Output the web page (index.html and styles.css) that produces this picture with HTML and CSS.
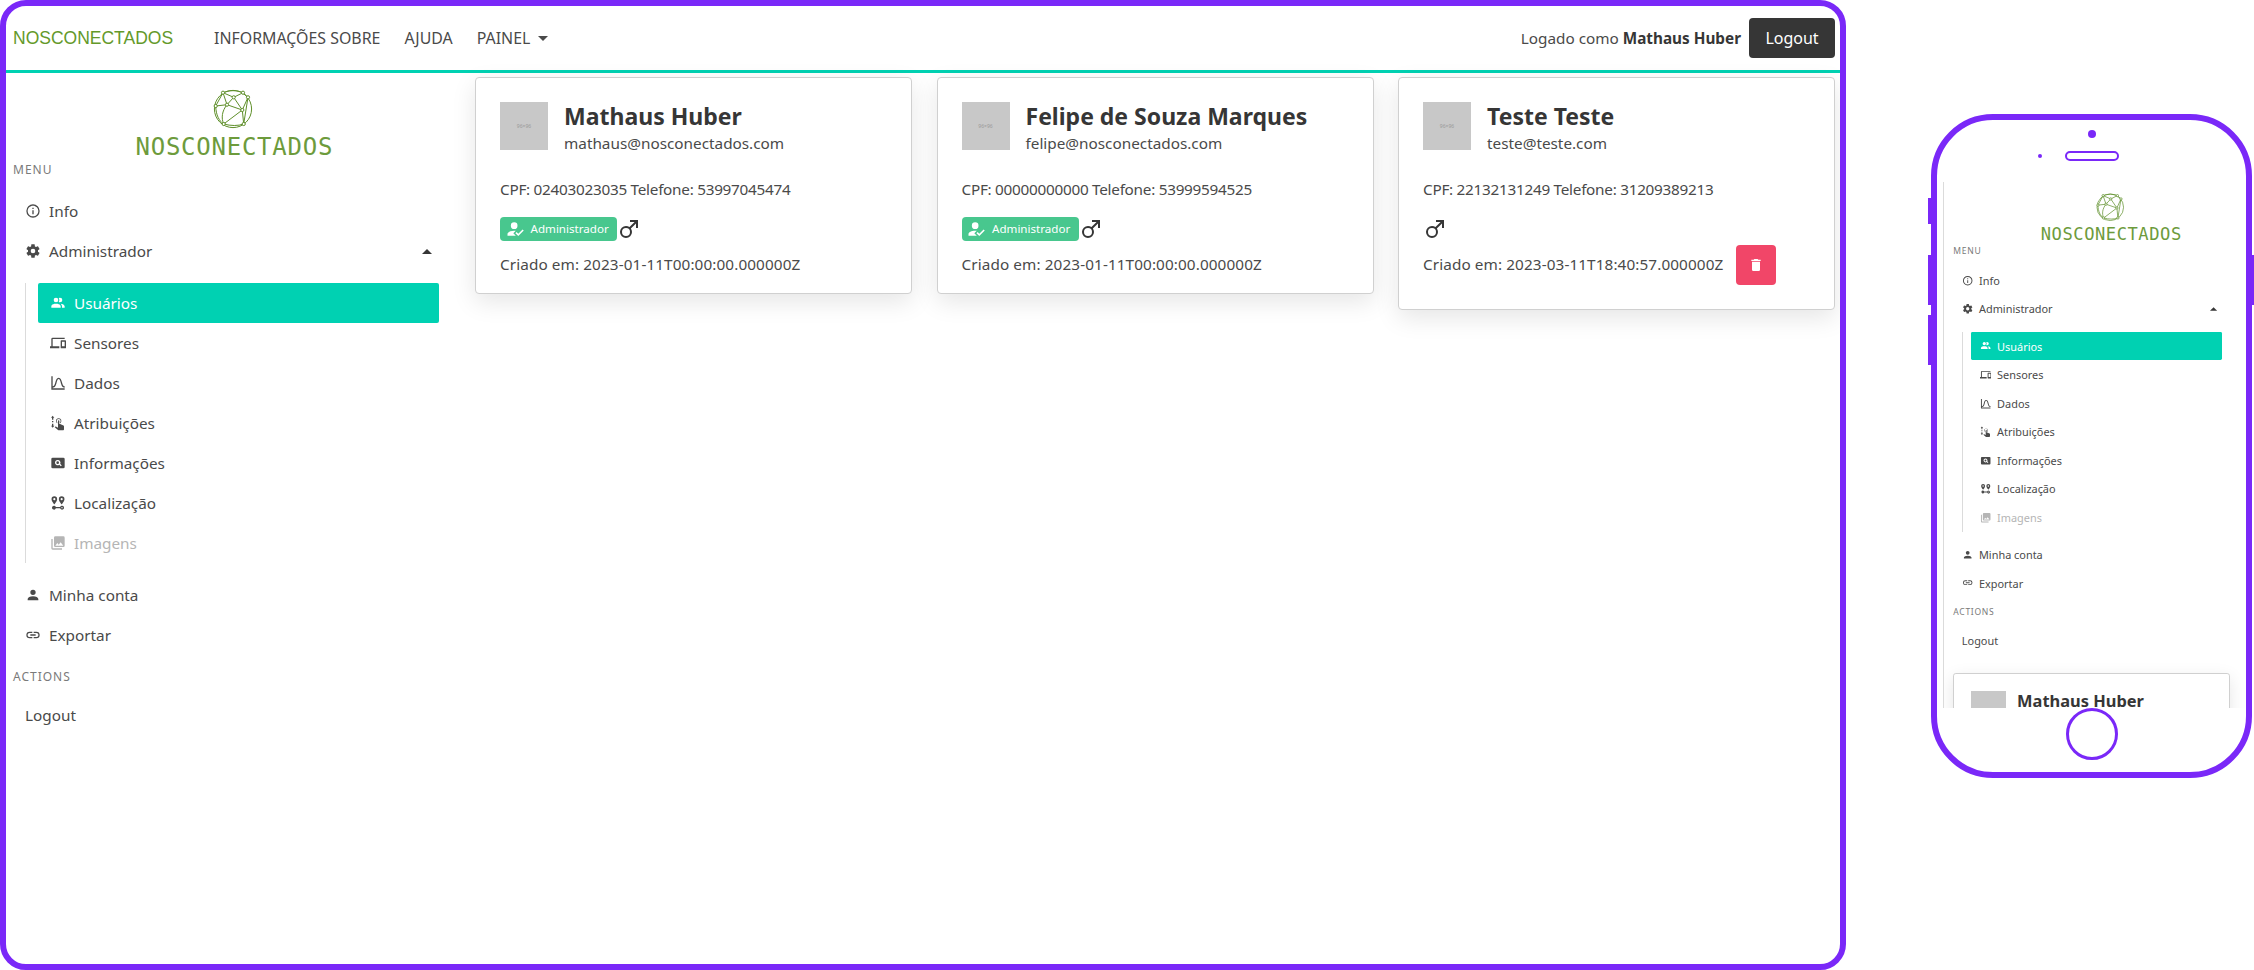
FILE: index.html
```html
<!DOCTYPE html>
<html lang="pt-BR">
<head>
<meta charset="utf-8">
<title>NosConectados</title>
<link rel="stylesheet" href="styles.css">
</head>
<body>
<svg class="defs" width="0" height="0">
  <symbol id="i-info" viewBox="0 0 24 24"><path d="M11,9H13V7H11M12,20C7.59,20 4,16.41 4,12C4,7.59 7.59,4 12,4C16.41,4 20,7.59 20,12C20,16.41 16.41,20 12,20M12,2A10,10 0 0,0 2,12A10,10 0 0,0 12,22A10,10 0 0,0 22,12A10,10 0 0,0 12,2M11,17H13V11H11V17Z"/></symbol>
  <symbol id="i-cog" viewBox="0 0 24 24"><path d="M12,15.5A3.5,3.5 0 0,1 8.5,12A3.5,3.5 0 0,1 12,8.5A3.5,3.5 0 0,1 15.5,12A3.5,3.5 0 0,1 12,15.5M19.43,12.97C19.47,12.65 19.5,12.33 19.5,12C19.5,11.67 19.47,11.34 19.43,11L21.54,9.37C21.73,9.22 21.78,8.95 21.66,8.73L19.66,5.27C19.54,5.05 19.27,4.96 19.05,5.05L16.56,6.05C16.04,5.66 15.5,5.32 14.87,5.07L14.5,2.42C14.46,2.18 14.25,2 14,2H10C9.75,2 9.54,2.18 9.5,2.42L9.13,5.07C8.5,5.32 7.96,5.66 7.44,6.05L4.95,5.05C4.73,4.96 4.46,5.05 4.34,5.27L2.34,8.73C2.21,8.95 2.27,9.22 2.46,9.37L4.57,11C4.53,11.34 4.5,11.67 4.5,12C4.5,12.33 4.53,12.65 4.57,12.97L2.46,14.63C2.27,14.78 2.21,15.05 2.34,15.27L4.34,18.73C4.46,18.95 4.73,19.03 4.95,18.95L7.44,17.94C7.96,18.34 8.5,18.68 9.13,18.93L9.5,21.58C9.54,21.82 9.75,22 10,22H14C14.25,22 14.46,21.82 14.5,21.58L14.87,18.93C15.5,18.67 16.04,18.34 16.56,17.94L19.05,18.95C19.27,19.03 19.54,18.95 19.66,18.73L21.66,15.27C21.78,15.05 21.73,14.78 21.54,14.63L19.43,12.97Z"/></symbol>
  <symbol id="i-up" viewBox="0 0 24 24"><path d="M7,15L12,10L17,15H7Z"/></symbol>
  <symbol id="i-down" viewBox="0 0 24 24"><path d="M7,10L12,15L17,10H7Z"/></symbol>
  <symbol id="i-users" viewBox="0 0 24 24"><path d="M16 17V19H2V17S2 13 9 13 16 17 16 17M12.5 7.5A3.5 3.5 0 1 0 9 11A3.5 3.5 0 0 0 12.5 7.5M15.94 13A5.32 5.32 0 0 1 18 17V19H22V17S22 13.37 15.94 13M15 4A3.39 3.39 0 0 0 13.07 4.59A5 5 0 0 1 13.07 10.41A3.39 3.39 0 0 0 15 11A3.5 3.5 0 0 0 15 4Z"/></symbol>
  <symbol id="i-devices" viewBox="0 0 24 24"><path d="M22,17H18V10H22M23,8H17A1,1 0 0,0 16,9V19A1,1 0 0,0 17,20H23A1,1 0 0,0 24,19V9A1,1 0 0,0 23,8M4,6H22V4H4A2,2 0 0,0 2,6V17H0V20H14V17H4V6Z"/></symbol>
  <symbol id="i-chart" viewBox="0 0 24 24"><path d="M9.96,11.31C10.82,8.1 11.5,6 13,6C14.5,6 15.18,8.1 16.04,11.31C17,14.92 18.1,19 22,19V17C19.8,17 19,14.54 17.97,10.8C17.08,7.46 16.15,4 13,4C9.85,4 8.92,7.46 8.03,10.8C7.03,14.54 6.2,17 4,17V2H2V22H22V20H4V19C7.9,19 9,14.92 9.96,11.31Z"/></symbol>
  <symbol id="i-tap" viewBox="0 0 24 24"><path d="M12,9A1,1 0 0,1 13,8A1,1 0 0,1 14,9V13.47L15.21,13.6L20.15,15.79C20.68,16.03 21,16.56 21,17.14V21.5C20.97,22.32 20.32,22.97 19.5,23H13C12.62,23 12.26,22.85 12,22.57L7.1,18.37L7.84,17.6C8.03,17.39 8.3,17.28 8.58,17.28H8.8L12,19V9M13,5A4,4 0 0,1 17,9C17,10.5 16.2,11.77 15,12.46V11.24C15.61,10.69 16,9.89 16,9A3,3 0 0,0 13,6A3,3 0 0,0 10,9C10,9.89 10.39,10.69 11,11.24V12.46C9.8,11.77 9,10.5 9,9A4,4 0 0,1 13,5Z"/><path d="M4,1L6.5,4H5V7H3V4H1.5ZM3,9H5V11H3ZM3,13H5V16H6.5L4,19L1.5,16H3Z"/></symbol>
  <symbol id="i-card" viewBox="0 0 24 24"><path fill-rule="evenodd" d="M4,4H20A2,2 0 0,1 22,6V18A2,2 0 0,1 20,20H4A2,2 0 0,1 2,18V6A2,2 0 0,1 4,4ZM11.5,7.5A4,4 0 1,0 13.9,14.7L16.2,17L17.6,15.6L15.3,13.3A4,4 0 0,0 11.5,7.5ZM11.5,9.5A2,2 0 1,1 11.5,13.5A2,2 0 1,1 11.5,9.5Z"/></symbol>
  <symbol id="i-path" viewBox="0 0 24 24"><path fill-rule="evenodd" d="M6.5,2A4.2,4.2 0 0,1 10.7,6.2C10.7,9.2 6.5,14 6.5,14C6.5,14 2.3,9.2 2.3,6.2A4.2,4.2 0 0,1 6.5,2ZM6.5,4.6A1.6,1.6 0 1,0 6.5,7.8A1.6,1.6 0 1,0 6.5,4.6Z"/><path fill-rule="evenodd" d="M17.5,2A4.2,4.2 0 0,1 21.7,6.2C21.7,9.2 17.5,14 17.5,14C17.5,14 13.3,9.2 13.3,6.2A4.2,4.2 0 0,1 17.5,2ZM17.5,4.6A1.6,1.6 0 1,0 17.5,7.8A1.6,1.6 0 1,0 17.5,4.6Z"/><path fill-rule="evenodd" d="M6,16A3,3 0 0,1 8.8,18H15.2A3,3 0 1,1 15.2,20H8.8A3,3 0 1,1 6,16ZM18,18A1,1 0 1,0 18,20A1,1 0 1,0 18,18Z"/></symbol>
  <symbol id="i-images" viewBox="0 0 24 24"><path d="M22,16V4A2,2 0 0,0 20,2H8A2,2 0 0,0 6,4V16A2,2 0 0,0 8,18H20A2,2 0 0,0 22,16M11,12L13.03,14.71L16,11L20,16H8M2,6V20A2,2 0 0,0 4,22H18V20H4V6"/></symbol>
  <symbol id="i-user" viewBox="0 0 24 24"><path d="M12,4A4,4 0 0,1 16,8A4,4 0 0,1 12,12A4,4 0 0,1 8,8A4,4 0 0,1 12,4M12,14C16.42,14 20,15.79 20,18V20H4V18C4,15.79 7.58,14 12,14Z"/></symbol>
  <symbol id="i-link" viewBox="0 0 24 24"><path d="M3.9,12C3.9,10.29 5.29,8.9 7,8.9H11V7H7A5,5 0 0,0 2,12A5,5 0 0,0 7,17H11V15.1H7C5.29,15.1 3.9,13.71 3.9,12M8,13H16V11H8V13M17,7H13V8.9H17C18.71,8.9 20.1,10.29 20.1,12C20.1,13.71 18.71,15.1 17,15.1H13V17H17A5,5 0 0,0 22,12A5,5 0 0,0 17,7Z"/></symbol>
  <symbol id="i-admin" viewBox="0 0 24 24"><path d="M21.1,12.5L22.5,13.91L15.97,20.5L12.5,17L13.9,15.59L15.97,17.67L21.1,12.5M10,17L13,20H3V18C3,15.79 6.58,14 11,14L12.89,14.11L10,17M11,4A4,4 0 0,1 15,8A4,4 0 0,1 11,12A4,4 0 0,1 7,8A4,4 0 0,1 11,4Z"/></symbol>
  <symbol id="i-male" viewBox="0 0 24 24"><path d="M9,9C10.29,9 11.5,9.41 12.47,10.11L17.58,5H13V3H21V11H19V6.41L13.89,11.5C14.59,12.5 15,13.7 15,15A6,6 0 0,1 9,21A6,6 0 0,1 3,15A6,6 0 0,1 9,9M9,11A4,4 0 0,0 5,15A4,4 0 0,0 9,19A4,4 0 0,0 13,15A4,4 0 0,0 9,11Z"/></symbol>
  <symbol id="i-trash" viewBox="0 0 24 24"><path d="M19,4H15.5L14.5,3H9.5L8.5,4H5V6H19M6,19A2,2 0 0,0 8,21H16A2,2 0 0,0 18,19V7H6V19Z"/></symbol>
  <symbol id="i-globe" viewBox="0 0 40 40"><g fill="none" stroke="currentColor" stroke-width="1"><circle cx="20" cy="20" r="18.6"/><path d="M10,3.7L20.7,8.3L30,3.7L35,8.3L29.3,21L20.7,8.3L14,15.7L2.7,17L10,3.7L14,15.7L29.3,21L30.7,35L35,8.3M14,15.7C9,22 8,29 10.7,35L29.3,21M2.7,17C3,26 6,32 10.7,35C18,37 25,37 30.7,35M10,3.7C16,1 24,1 30,3.7"/></g><g fill="#fff" stroke="currentColor" stroke-width="1"><circle cx="10" cy="3.7" r="1.6"/><circle cx="30" cy="3.7" r="1.6"/><circle cx="20.7" cy="8.3" r="1.6"/><circle cx="35" cy="8.3" r="1.6"/><circle cx="2.7" cy="17" r="1.6"/><circle cx="14" cy="15.7" r="1.6"/><circle cx="29.3" cy="21" r="1.6"/><circle cx="10.7" cy="35" r="1.6"/><circle cx="30.7" cy="35" r="1.6"/></g></symbol>
</svg>

<div class="stage">
  <div class="laptop">
    <nav class="navbar">
      <a class="brand">NOSCONECTADOS</a>
      <a class="nav-link nav-first">INFORMAÇÕES SOBRE</a>
      <a class="nav-link">AJUDA</a>
      <a class="nav-link">PAINEL<svg class="nav-caret"><use href="#i-down"/></svg></a>
      <div class="nav-end">
        <span>Logado como <strong>Mathaus Huber</strong></span>
        <button class="btn-logout">Logout</button>
      </div>
    </nav>
    <div class="app">
      <aside class="sidebar">
        <div class="logo">
          <svg class="logo-globe"><use href="#i-globe"/></svg>
          <div class="logo-text">NOSCONECTADOS</div>
        </div>
        <p class="menu-label">Menu</p>
        <ul class="menu">
          <li class="item"><svg class="ico"><use href="#i-info"/></svg>Info</li>
          <li class="item"><svg class="ico"><use href="#i-cog"/></svg>Administrador<svg class="caret"><use href="#i-up"/></svg></li>
        </ul>
        <ul class="submenu">
          <li class="item active"><svg class="ico"><use href="#i-users"/></svg>Usuários</li>
          <li class="item"><svg class="ico"><use href="#i-devices"/></svg>Sensores</li>
          <li class="item"><svg class="ico"><use href="#i-chart"/></svg>Dados</li>
          <li class="item"><svg class="ico"><use href="#i-tap"/></svg>Atribuições</li>
          <li class="item"><svg class="ico"><use href="#i-card"/></svg>Informações</li>
          <li class="item"><svg class="ico"><use href="#i-path"/></svg>Localização</li>
          <li class="item muted"><svg class="ico"><use href="#i-images"/></svg>Imagens</li>
        </ul>
        <ul class="menu">
          <li class="item"><svg class="ico"><use href="#i-user"/></svg>Minha conta</li>
          <li class="item"><svg class="ico"><use href="#i-link"/></svg>Exportar</li>
        </ul>
        <p class="menu-label label-actions">Actions</p>
        <ul class="menu">
          <li class="item">Logout</li>
        </ul>
      </aside>
      <main class="cards">
        <article class="card">
          <div class="media">
            <div class="avatar">96×96</div>
            <div><h2 class="name">Mathaus Huber</h2><p class="email">mathaus@nosconectados.com</p></div>
          </div>
          <p class="line">CPF: 02403023035 Telefone: 53997045474</p>
          <div class="tags"><span class="badge"><svg class="badge-ico"><use href="#i-admin"/></svg>Administrador</span><svg class="male"><use href="#i-male"/></svg></div>
          <div class="created"><span class="created-text">Criado em: 2023-01-11T00:00:00.000000Z</span></div>
        </article>
        <article class="card">
          <div class="media">
            <div class="avatar">96×96</div>
            <div><h2 class="name">Felipe de Souza Marques</h2><p class="email">felipe@nosconectados.com</p></div>
          </div>
          <p class="line">CPF: 00000000000 Telefone: 53999594525</p>
          <div class="tags"><span class="badge"><svg class="badge-ico"><use href="#i-admin"/></svg>Administrador</span><svg class="male"><use href="#i-male"/></svg></div>
          <div class="created"><span class="created-text">Criado em: 2023-01-11T00:00:00.000000Z</span></div>
        </article>
        <article class="card">
          <div class="media">
            <div class="avatar">96×96</div>
            <div><h2 class="name">Teste Teste</h2><p class="email">teste@teste.com</p></div>
          </div>
          <p class="line">CPF: 22132131249 Telefone: 31209389213</p>
          <div class="tags"><svg class="male"><use href="#i-male"/></svg></div>
          <div class="created"><span class="created-text">Criado em: 2023-03-11T18:40:57.000000Z</span><button class="btn-delete"><svg class="trash"><use href="#i-trash"/></svg></button></div>
        </article>
      </main>
    </div>
  </div>

  <div class="phone">
    <span class="side side-l1"></span>
    <span class="side side-l2"></span>
    <span class="side side-l3"></span>
    <span class="side side-r"></span>
    <div class="phone-top">
      <span class="camera"></span>
      <span class="speaker"><span class="sensor"></span></span>
    </div>
    <div class="screen">
      <div class="screen-content">
        <aside class="sidebar">
          <div class="logo">
            <svg class="logo-globe"><use href="#i-globe"/></svg>
            <div class="logo-text">NOSCONECTADOS</div>
          </div>
          <p class="menu-label">Menu</p>
          <ul class="menu">
            <li class="item"><svg class="ico"><use href="#i-info"/></svg>Info</li>
            <li class="item"><svg class="ico"><use href="#i-cog"/></svg>Administrador<svg class="caret"><use href="#i-up"/></svg></li>
          </ul>
          <ul class="submenu">
            <li class="item active"><svg class="ico"><use href="#i-users"/></svg>Usuários</li>
            <li class="item"><svg class="ico"><use href="#i-devices"/></svg>Sensores</li>
            <li class="item"><svg class="ico"><use href="#i-chart"/></svg>Dados</li>
            <li class="item"><svg class="ico"><use href="#i-tap"/></svg>Atribuições</li>
            <li class="item"><svg class="ico"><use href="#i-card"/></svg>Informações</li>
            <li class="item"><svg class="ico"><use href="#i-path"/></svg>Localização</li>
            <li class="item muted"><svg class="ico"><use href="#i-images"/></svg>Imagens</li>
          </ul>
          <ul class="menu">
            <li class="item"><svg class="ico"><use href="#i-user"/></svg>Minha conta</li>
            <li class="item"><svg class="ico"><use href="#i-link"/></svg>Exportar</li>
          </ul>
          <p class="menu-label label-actions">Actions</p>
          <ul class="menu">
            <li class="item">Logout</li>
          </ul>
        </aside>
        <article class="card">
          <div class="media">
            <div class="avatar"></div>
            <div><h2 class="name">Mathaus Huber</h2></div>
          </div>
        </article>
      </div>
    </div>
    <div class="phone-bottom"><span class="home"></span></div>
  </div>
</div>
</body>
</html>
```

FILE: styles.css
```css
* { box-sizing: border-box; }
html, body { margin: 0; padding: 0; background: #fff; }
body {
  width: 2254px;
  height: 970px;
  overflow: hidden;
  font-family: "Noto Sans", "Open Sans", sans-serif;
  font-size: 15.3px;
  line-height: 24px;
  color: #4a4a4a;
}
p, h2, ul { margin: 0; padding: 0; }
ul { list-style: none; }
svg { fill: currentColor; flex: none; display: block; }
.defs { position: absolute; }

.stage { display: flex; align-items: flex-start; }

/* laptop frame */
.laptop {
  width: 1846px;
  height: 970px;
  border: 6px solid #7a28f8;
  border-radius: 26px;
  overflow: hidden;
  flex: none;
}
.navbar {
  height: 67px;
  border-bottom: 3px solid #00d1b2;
  display: flex;
  align-items: center;
  padding: 0 5px 0 7px;
}
.brand {
  font-family: "Liberation Sans", Arial, sans-serif;
  font-size: 17.5px;
  color: #64992a;
}
.nav-link { margin-left: 24px; display: flex; align-items: center; font-size: 15.9px; }
.nav-first { margin-left: 41px; }
.nav-caret { width: 24px; height: 24px; margin-left: 1px; }
.nav-end { margin-left: auto; display: flex; align-items: center; gap: 8px; }
.nav-end strong { color: #363636; font-weight: 700; }
.btn-logout {
  width: 86px;
  height: 40px;
  background: #363636;
  color: #fff;
  border: 0;
  border-radius: 4px;
  font: inherit;
  font-size: 16px;
}

.app { display: flex; }

/* sidebar */
.sidebar { width: 457px; padding: 0 0 0 7px; flex: none; }
.logo { display: flex; flex-direction: column; align-items: center; padding: 16px 0 0; width: 440px; }
.logo-globe { width: 40px; height: 40px; color: #5f8f2a; }
.logo-text {
  margin-top: 7px;
  font-family: "DejaVu Sans Mono", monospace;
  font-size: 24px;
  line-height: 22px;
  width: 195px;
  letter-spacing: .75px;
  white-space: nowrap;
  color: #6d9b3c;
}
.menu-label {
  font-size: 12px;
  line-height: 16px;
  letter-spacing: 1px;
  text-transform: uppercase;
  color: #7a7a7a;
  margin-top: 4px;
  margin-bottom: 13px;
}
.label-actions { margin-top: 14px; margin-bottom: 10px; }
.menu, .submenu { width: 426px; }
.submenu {
  margin: 12px 0 12px 12px;
  padding-left: 12px;
  border-left: 1px solid #dbdbdb;
  width: 414px;
}
.item {
  height: 40px;
  padding: 0 0 0 12px;
  display: flex;
  align-items: center;
  border-radius: 2px;
}
.ico { width: 16px; height: 16px; margin-right: 8px; }
.caret { width: 24px; height: 24px; margin-left: auto; color: #363636; }
.active { background: #00d1b2; color: #fff; }
.muted { color: #b5b5b5; }

/* cards */
.cards {
  flex: none;
  width: 1360px;
  margin: 4px 0 0 12px;
  display: grid;
  grid-template-columns: repeat(3, 1fr);
  gap: 24.5px;
  align-items: start;
}
.card {
  background: #fff;
  border: 1px solid #d0d0d0;
  border-radius: 4px;
  box-shadow: 0 8px 24px rgba(10, 10, 10, .1);
  padding: 24px 24px 17px;
}
.media { display: flex; gap: 16px; margin-bottom: 22px; }
.avatar {
  width: 48px;
  height: 48px;
  background: #c8c8c8;
  color: #999;
  font-size: 5px;
  line-height: 48px;
  text-align: center;
  flex: none;
}
.name {
  font-size: 23px;
  line-height: 30px;
  font-weight: 700;
  color: #363636;
  margin-top: -1px;
  white-space: nowrap;
}
.email { line-height: 24px; }
.line { margin-bottom: 16px; letter-spacing: -.27px; }
.tags { display: flex; height: 24px; align-items: center; }
.badge {
  height: 24px;
  width: 117px;
  padding: 0 0 0 4.5px;
  display: flex;
  align-items: center;
  gap: 6px;
  background: #48c78e;
  color: #fff;
  font-size: 11.6px;
  border-radius: 4px;
}
.badge-ico { width: 20px; height: 20px; }
.male { width: 24px; height: 24px; color: #363636; }
.created { display: flex; align-items: flex-start; margin-top: 4px; }
.created-text { margin-top: 7px; letter-spacing: .1px; }
.btn-delete {
  width: 40px;
  height: 40px;
  margin: 0 0 7px 13px;
  background: #f14668;
  color: #fff;
  border: 0;
  border-radius: 4px;
  padding: 0;
  display: flex;
  align-items: center;
  justify-content: center;
}
.trash { width: 16px; height: 16px; }

/* phone frame */
.phone {
  position: relative;
  flex: none;
  width: 321px;
  height: 664px;
  margin: 114px 0 0 85px;
  border: 6px solid #7a28f8;
  border-radius: 62px;
  display: flex;
  flex-direction: column;
}
.side { position: absolute; background: #7a28f8; width: 3px; }
.side-l1 { left: -9px; top: 78px; height: 26px; }
.side-l2 { left: -9px; top: 135px; height: 50px; }
.side-l3 { left: -9px; top: 195px; height: 50px; }
.side-r { right: -9px; top: 135px; height: 50px; }
.phone-top {
  height: 62px;
  flex: none;
  display: flex;
  flex-direction: column;
  align-items: center;
  padding-top: 10px;
}
.camera { width: 8px; height: 8px; border-radius: 50%; background: #7a28f8; }
.speaker {
  position: relative;
  width: 54px;
  height: 10px;
  margin-top: 13px;
  border: 2px solid #7a28f8;
  border-radius: 5px;
}
.sensor {
  position: absolute;
  left: -29px;
  top: 1px;
  width: 4px;
  height: 4px;
  border-radius: 50%;
  background: #7a28f8;
}
.screen {
  height: 526px;
  flex: none;
  margin: 0 1px 0 6px;
  border-left: 1px solid #dbdbdb;
  overflow: hidden;
}
.screen-content { zoom: .714; width: 421px; }
.screen-content .sidebar { width: 421px; padding-left: 13px; }
.screen-content .menu { width: 376px; }
.screen-content .submenu { width: 364px; }
.screen-content .card { width: 388px; margin: 26px 0 0 13px; }
.phone-bottom { flex: 1; display: flex; justify-content: center; align-items: flex-start; }
.home { width: 52px; height: 52px; border: 3px solid #7a28f8; border-radius: 50%; background: #fff; }
```
